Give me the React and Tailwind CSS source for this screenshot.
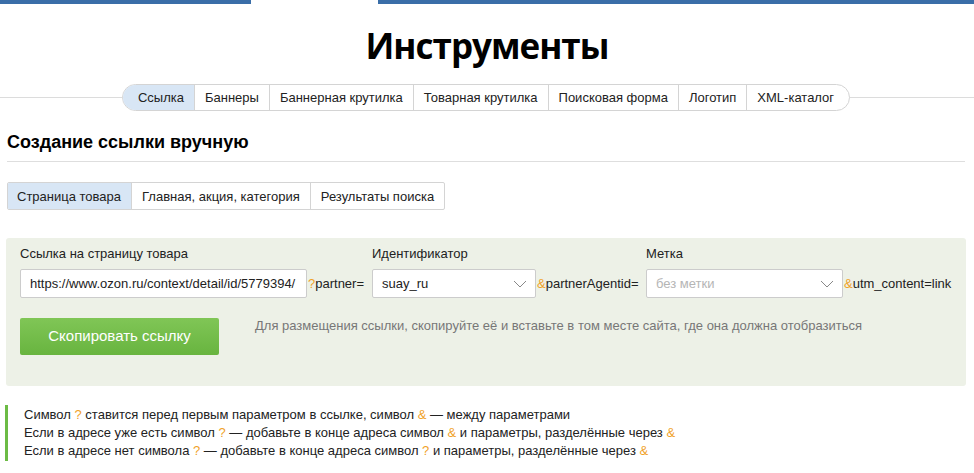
import React from "react";

const NAV = ["Ссылка", "Баннеры", "Баннерная крутилка", "Товарная крутилка", "Поисковая форма", "Логотип", "XML-каталог"];
const SUB = ["Страница товара", "Главная, акция, категория", "Результаты поиска"];

function Q({ children }) {
  return <span className="text-[#f0a229]">{children}</span>;
}

function Chevron() {
  return (
    <svg width="14" height="8" viewBox="0 0 14 8" className="shrink-0">
      <path d="M1 1l6 6 6-6" fill="none" stroke="#888" strokeWidth="1" />
    </svg>
  );
}

export default function App() {
  return (
    <div className="w-[974px] h-[473px] bg-white overflow-hidden text-[#222]" style={{ fontFamily: '"Liberation Sans", Arial, sans-serif' }}>
      {/* top strip */}
      <div className="flex h-[4px]">
        <div className="w-[251px] bg-[#3a6ea8]" />
        <div className="w-[127px]" />
        <div className="flex-1 bg-[#3a6ea8]" />
      </div>

      <h1
        className="text-center text-[35px] font-bold leading-none tracking-[-1px] text-black mt-[24px] h-[40px]"
        style={{ fontFamily: '"Open Sans", sans-serif' }}
      >
        Инструменты
      </h1>

      {/* nav */}
      <div className="relative mt-[16px] h-[27px] flex justify-center">
        <div className="absolute left-0 right-0 top-[13px] h-px bg-[#dcdcdc]" />
        <div className="relative flex ml-[-2px] h-[27px] border border-[#d4d4d4] rounded-[14px] bg-white overflow-hidden text-[13px] leading-none">
          {NAV.map((n, i) => (
            <div
              key={n}
              className={
                "flex items-center " +
                (i === 0 ? "pl-[15px] pr-[10px] bg-[#d8e6f5] " : "px-[10px] border-l border-[#d4d4d4] ") +
                (i === NAV.length - 1 ? "pr-[15px]" : "")
              }
            >
              {n}
            </div>
          ))}
        </div>
      </div>

      <div className="px-[7px]">
        <h2 className="mt-[20px] text-[18px] font-bold text-black leading-[22px]">Создание ссылки вручную</h2>
        <div className="mt-[8px] mr-[2px] h-px bg-[#dedede]" />

        {/* sub tabs */}
        <div className="mt-[20px] flex">
          <div className="flex h-[28px] border border-[#d4d4d4] rounded-[2px] text-[13px] leading-none overflow-hidden">
            {SUB.map((s, i) => (
              <div
                key={s}
                className={"flex items-center px-[10px] " + (i === 0 ? "pl-[9px] bg-[#d8e6f5]" : "border-l border-[#d4d4d4]")}
              >
                {s}
              </div>
            ))}
          </div>
        </div>
      </div>

      {/* panel */}
      <div className="mx-[6px] mt-[28px] w-[960px] h-[148px] bg-[#edf1e7] rounded-[3px] px-[14px] pt-[8px]">
        <div className="flex text-[13px] leading-[16px] text-[#222]">
          <div className="w-[352px]">Ссылка на страницу товара</div>
          <div className="w-[274px]">Идентификатор</div>
          <div>Метка</div>
        </div>
        <div className="mt-[7px] flex items-center text-[13px]">
          <div className="w-[287px] h-[29px] bg-white border border-[#ccc] rounded-[2px] flex items-center pl-[9px] text-[#222]">
            https://www.ozon.ru/context/detail/id/5779394/
          </div>
          <div className="w-[65px] pl-px">
            <Q>?</Q>partner=
          </div>
          <div className="w-[164px] h-[29px] bg-white border border-[#ccc] rounded-[2px] flex items-center justify-between pl-[9px] pr-[8px]">
            <span>suay_ru</span>
            <Chevron />
          </div>
          <div className="w-[110px] pl-px">
            <Q>&amp;</Q>partnerAgentid=
          </div>
          <div className="w-[197px] h-[29px] bg-white border border-[#ccc] rounded-[2px] flex items-center justify-between pl-[9px] pr-[8px]">
            <span className="text-[#b5b5b5]">без метки</span>
            <Chevron />
          </div>
          <div className="pl-px">
            <Q>&amp;</Q>utm_content=link
          </div>
        </div>
        <div className="mt-[20px] flex items-start">
          <div className="w-[199px] h-[37px] rounded-[2px] bg-gradient-to-b from-[#80c656] to-[#68b43f] flex items-center justify-center text-white text-[15px]">
            Скопировать ссылку
          </div>
          <div className="ml-[36px] mt-[0px] text-[13px] text-[#777] leading-[16px]">
            Для размещения ссылки, скопируйте её и вставьте в том месте сайта, где она должна отобразиться
          </div>
        </div>
      </div>

      {/* notes */}
      <div className="ml-[5px] mt-[19px] border-l-[3px] border-[#6cbb45] pl-[16px] py-[1px] text-[13px] leading-[18px] text-[#222]">
        <div>Символ <Q>?</Q> ставится перед первым параметром в ссылке, символ <Q>&amp;</Q> — между параметрами</div>
        <div>Если в адресе уже есть символ <Q>?</Q> — добавьте в конце адреса символ <Q>&amp;</Q> и параметры, разделённые через <Q>&amp;</Q></div>
        <div>Если в адресе нет символа <Q>?</Q> — добавьте в конце адреса символ <Q>?</Q> и параметры, разделённые через <Q>&amp;</Q></div>
      </div>
    </div>
  );
}
